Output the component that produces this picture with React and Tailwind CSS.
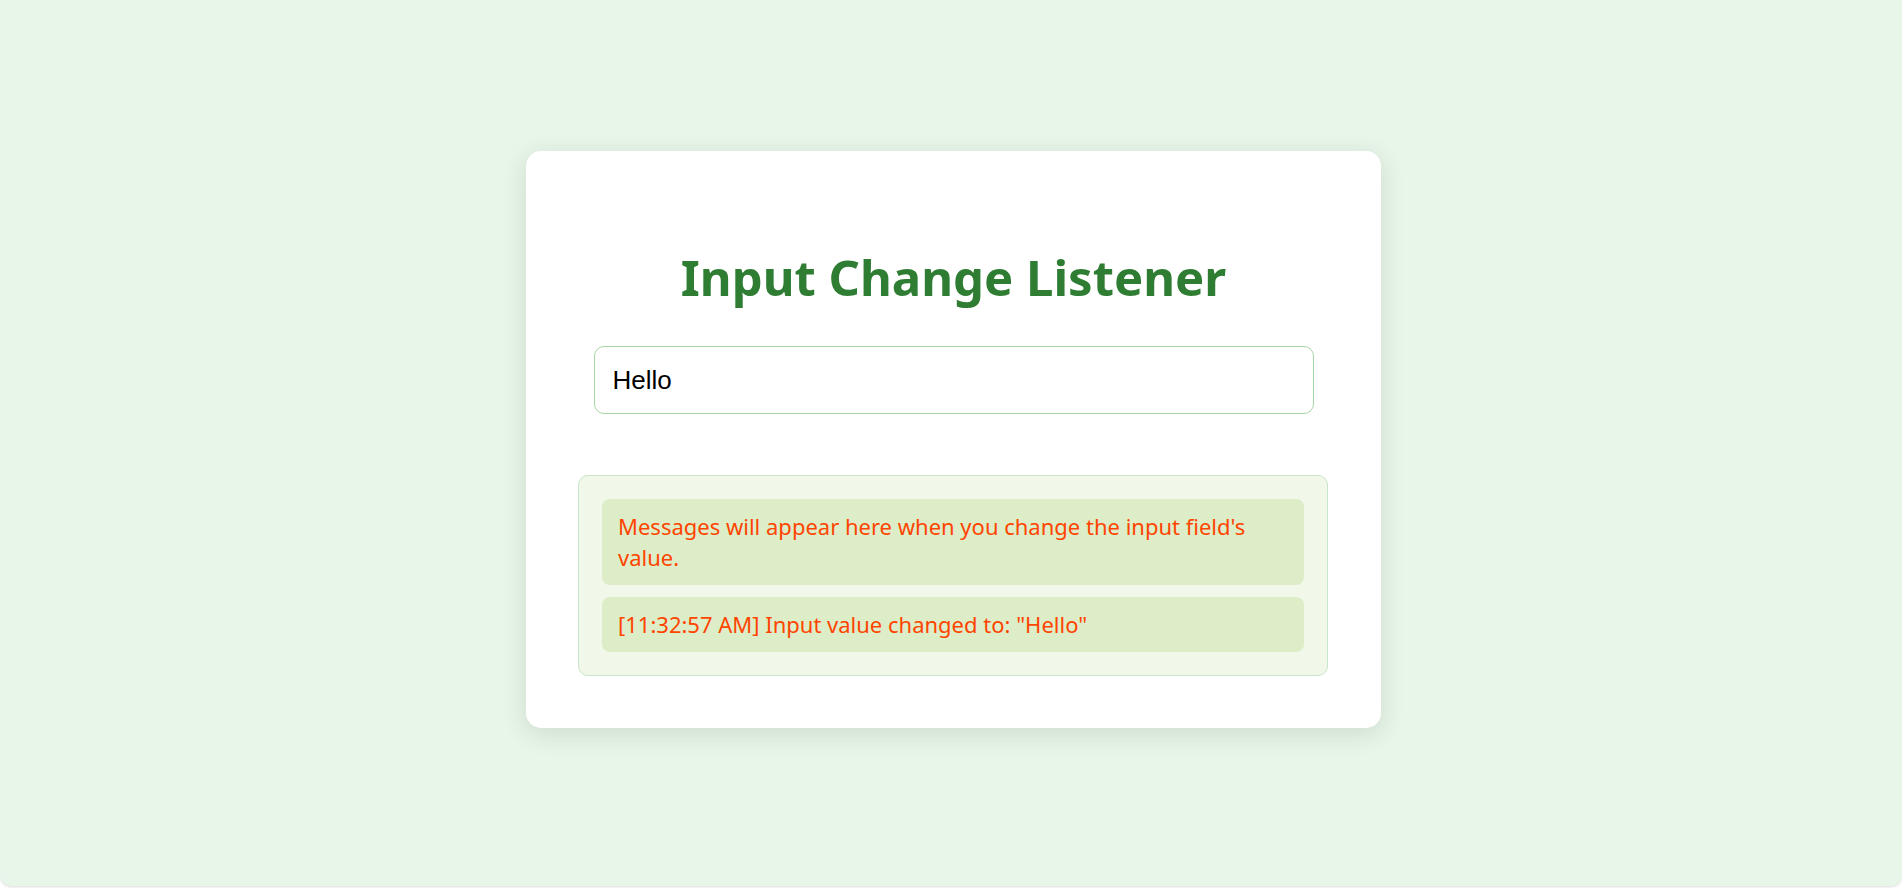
export default function App() {
  return (
    <div className="w-full h-[888px] bg-white">
      <div className="h-[886px] w-full bg-[#e8f5e9] rounded-b-[12px] shadow-[0_1px_3px_rgba(0,0,0,0.15)] flex items-start justify-center pt-[151px]">
        <div className="ml-[5px] w-[855px] h-[577px] bg-white rounded-[15px] shadow-[0_6px_24px_rgba(40,80,40,0.14)] px-[52px] pt-[96px] flex flex-col">
          <h1
            className="text-center text-[49px] leading-[60px] font-bold text-[#2e7d32]"
            style={{ fontFamily: '"Noto Sans", "Open Sans", sans-serif' }}
          >
            Input Change Listener
          </h1>
          <input
            type="text"
            defaultValue="Hello"
            className="mt-[39px] mx-auto w-[720px] h-[68px] border border-[#a5d6a7] rounded-[10px] px-[18px] text-[26px] text-black outline-none"
            style={{ fontFamily: '"Liberation Sans", Arial, sans-serif' }}
          />
          <div
            className="mt-[61px] w-[750px] border border-[#c8e6c9] bg-[#f1f8e9] rounded-[10px] p-[23px] flex flex-col gap-[12px]"
            style={{ fontFamily: '"Noto Sans", "Open Sans", sans-serif' }}
          >
            <div className="bg-[#dcedc8] rounded-[8px] px-[16px] py-[12px] text-[22px] leading-[31px] text-[#ff4500]">
              Messages will appear here when you change the input field's value.
            </div>
            <div className="bg-[#dcedc8] rounded-[8px] px-[16px] py-[12px] text-[22px] leading-[31px] text-[#ff4500]">
              [11:32:57 AM] Input value changed to: "Hello"
            </div>
          </div>
        </div>
      </div>
    </div>
  );
}
